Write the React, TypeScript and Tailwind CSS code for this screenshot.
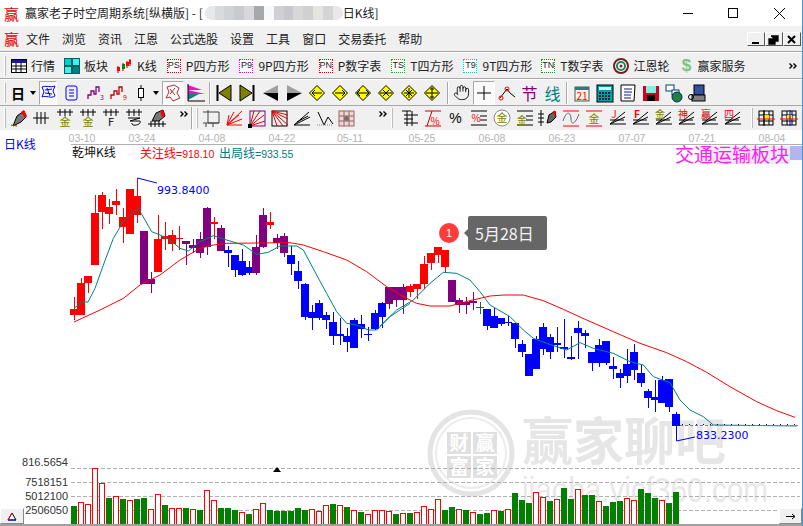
import React from "react";
import { Hand } from "lucide-react";

const F = { fontFamily: '"Noto Sans CJK SC", "Liberation Sans", sans-serif' };
const LS = { fontFamily: '"Liberation Sans", sans-serif' };
const DV = { fontFamily: '"DejaVu Sans", sans-serif' };
const R = "#ff0000", B = "#0000ff", P = "#800080", G = "#008000", T = "#008080";
type C = [number, number, number, number, string];
// wick top, wick bottom, body top, body bottom, colour (3x crop coordinates)
const c1: C[] = [
  [397,465,432,450,R],[340,450,354,450,R],[333,384,333,354,R],[90,300,144,300,R],[81,192,90,141,R],[102,177,126,147,R],[72,150,108,120,R],[130,234,156,186,R],[72,207,72,207,R],[39,174,93,150,R],
  [198,357,198,357,P],[320,384,342,357,P],[150,321,222,321,R],[171,255,213,222,R],[195,258,210,237,R],[183,255,219,222,R],[228,300,228,237,P],[222,264,240,249,P],[200,279,222,264,P],[125,270,129,246,P],
  [156,222,171,177,R],[180,258,189,258,P],[243,306,255,264,B],[270,336,270,315,B],[252,333,288,330,B],[288,330,306,324,B],[210,330,246,324,P],[129,249,150,246,P],[141,192,171,180,R],[207,252,219,234,P],
  [204,276,213,264,P],[243,330,270,297,B],[288,372,318,348,B],[354,465,357,456,B],[420,495,441,459,B],[405,465,414,459,B],[441,492,450,465,B],[441,540,471,513,B],[459,540,507,513,B],[489,561,513,531,B],
  [459,549,465,549,B],[450,519,477,492,B],[486,528,507,510,B],[435,495,444,492,B],[410,490,414,456,B],
];
const c2: C[] = [
  [231,297,231,282,P],[231,291,231,270,P],[222,312,231,270,P],[222,261,228,246,R],[222,267,222,237,R],[138,237,162,222,R],[129,180,129,159,R],[111,159,111,135,R],[120,189,120,171,R],
  [210,276,210,276,P],[264,309,270,285,P],[261,312,276,285,P],[246,300,272,279,P],[276,312,291,294,"#306030"],[297,360,297,348,B],[294,354,318,354,B],[324,348,324,342,B],[318,348,336,339,B],[339,414,339,387,B],
  [390,441,402,426,B],[432,498,432,498,B],[378,477,387,477,B],[339,435,351,417,B],[372,447,381,426,B],[351,426,399,405,B],[327,444,411,417,B],[378,450,441,447,B],[333,447,354,369,B],[360,414,369,378,B],
  [426,483,426,459,B],[387,471,405,459,B],[393,465,393,459,B],[441,507,468,477,B],[477,534,489,504,B],[417,519,462,498,B],[402,510,426,480,B],[462,531,489,519,B],[537,594,543,564,B],[510,606,561,570,B],
  [498,579,510,579,B],[507,606,507,591,B],[606,693,612,648,B],
];
const candles = [
  ...c1.map((c, i) => ({ x: 74 + 7 * i, d: c, oy: 165 })),
  ...c2.map((c, i) => ({ x: 389 + 7 * i, d: c, oy: 210 })),
];
const v1 = [198,186,192,84,129,174,168,177,180,177,174,207,162,195,204,204,204,207,210,150,180,204,204,210,216,222,207,189,210,213,213,213,204,210,207,213,195,192,195,201,210,216,222,210,210,213,222];
const v1c = "grrrrgrgrggrrgrrgrgrrgggrgrrggggggrrrgrgrgrrrrg";
const v2 = [339,339,336,318,327,297,330,321,327,330,336,342,339,330,333,327,279,300,309,276,291,303,297,264,297,267,285,285,303,318,306,303,294,300,267,279,294,300,309,276];
const v2c = "rgrrrrggrgrggrgrgggrrgrggrggrgggrrgggrgg";
const pts = (a: number[][], ox: number, oy: number) => a.map(([x, y]) => `${ox + x / 3},${oy + y / 3}`).join(" ");
const redA = [[42,471],[120,435],[190,400],[240,360],[300,330],[360,285],[420,250],[460,240],[500,235],[690,233],[730,240],[790,260],[860,285],[920,320],[980,365],[1040,400]];
const redB = [[60,255],[110,280],[150,288],[210,288],[270,272],[330,258],[370,255],[430,255],[490,272],[550,298],[620,330],[700,365],[780,400],[860,428],[920,455],[980,487],[1050,530],[1130,575],[1190,602],[1245,622]];
const tealA = [[42,430],[66,411],[84,411],[105,370],[130,300],[160,220],[190,170],[210,150],[235,130],[255,165],[275,200],[300,210],[330,225],[360,250],[385,258],[420,230],[460,212],[500,225],[550,240],[590,268],[625,262],[660,243],[710,243],[730,255],[770,330],[800,385],[830,440],[860,475],[890,480],[925,495],[950,495],[990,455],[1050,415]];
const tealB = [[0,348],[50,300],[100,270],[150,220],[190,187],[230,190],[270,210],[300,245],[330,285],[390,320],[430,360],[460,385],[500,400],[560,420],[600,398],[640,415],[700,430],[750,455],[790,465],[820,500],[870,518],[900,570],[930,600],[970,620],[1000,645],[1250,648]];
const dates: [string, number][] = [["03-10",82],["03-24",142],["04-08",212],["04-22",282],["05-11",350],["05-25",422],["06-08",492],["06-23",562],["07-07",632],["07-21",702],["08-04",772]];

const S = ({ children, w = 22 }: { children: React.ReactNode; w?: number }) => (
  <svg width={w} height={22} viewBox={`0 0 ${w} 22`} fill="none" strokeWidth={1} className="shrink-0">{children}</svg>
);
const Tx = ({ x, y, s, c, t, b }: { x: number; y: number; s: number; c: string; t: string; b?: boolean }) => (
  <text x={x} y={y} fontSize={s} fill={c} textAnchor="middle" fontWeight={b ? 700 : 400} style={F}>{t}</text>
);
const Dia = ({ d }: { d: string }) => (
  <S><path d="M11 3.5 18.5 11 11 18.5 3.5 11Z" fill="#ffff00" stroke="#000" /><path d={d} stroke="#000" /></S>
);
const Fan = ({ t, c, b }: { t: string; c: string; b?: boolean }) => (
  <Btn w={23}><S><path d="M4 17H20M4 17 19 5M4 17 19 10M4 13H18" stroke="#000" /><Tx x={8} y={11} s={10} c={c} t={t} b={b} /></S></Btn>
);
const Hash = ({ t, c }: { t: string; c: string }) => (
  <S><path d="M3 5H19M6 2V9M11 2V9M16 2V9" stroke="#000" /><Tx x={11} y={19} s={11} c={c} t={t} /></S>
);
const Brush = () => (
  <S><path d="M5 19 9 9 16 4 18 10 13 15Z" fill="#777" stroke="#000" /><path d="M13 5 16 3 19 9 17 11Z" fill="#f00" /><path d="M3 18 9 19" stroke="#f00" /></S>
);

const Grip = ({ ml = 4 }: { ml?: number }) => <div className="mr-[1px] h-[20px] w-[2px] shrink-0 border-l border-white bg-[#bcbcbc]" style={{ marginLeft: ml }} />;
const Sep = () => <div className="mx-[2px] h-[22px] w-[2px] shrink-0 border-r border-white bg-[#a8a8a8]" />;
const Gap = ({ w }: { w: number }) => <div className="shrink-0" style={{ width: w }} />;
function Btn({ children, w = 23, on }: { children: React.ReactNode; w?: number; on?: boolean }) {
  return (
    <div className={`flex h-[24px] shrink-0 items-center justify-center ${on ? "border border-t-[#a8a8a8] border-l-[#a8a8a8] border-r-white border-b-white bg-[#fafafa]" : ""}`} style={{ width: w }}>{children}</div>
  );
}
const Caret = () => <div className="flex w-[7px] shrink-0 justify-center"><svg width="6" height="4"><path d="M0 0H6L3 4Z" fill="#000" /></svg></div>;
const More = () => <svg width="8" height="6"><path d="M0.5 0.5 3 3 0.5 5.5M4.5 0.5 7 3 4.5 5.5" stroke="#000" strokeWidth="1.4" fill="none" /></svg>;

const Box = ({ t, c }: { t: string; c: string }) => (
  <div className="flex h-[14px] w-[14px] shrink-0 items-center justify-center border border-dotted bg-white text-[9px] leading-none text-[#222]" style={{ borderColor: c, ...LS }}>{t}</div>
);
const Item = ({ icon, label, ml, gap = 5 }: { icon: React.ReactNode; label: string; ml: number; gap?: number }) => (
  <div className="flex shrink-0 items-center" style={{ marginLeft: ml, gap }}>
    {icon}<span className="text-[12px] leading-none text-[#222]">{label}</span>
  </div>
);
const Logo = () => <span className="text-[15px] leading-none text-[#e00000]" style={{ fontFamily: '"Noto Sans CJK SC", serif' }}>赢</span>;
const Tx2 = ({ t, c }: { t: string; c: string }) => <span className="text-[16px] leading-none" style={{ color: c }}>{t}</span>;

export default function App() {
  return (
    <div className="flex h-[526px] w-[803px] flex-col overflow-hidden border-r border-[#3f97d8] bg-white" style={F}>
      {/* title */}
      <div className="flex h-[26px] shrink-0 items-center bg-white pl-[4px] text-[12px] text-[#222]">
        <Logo />
        <span className="ml-[6px] whitespace-pre">赢家老子时空周期系统[纵横版] - [</span>
        <div className="ml-[2px] flex h-[14px] w-[138px] overflow-hidden rounded-[7px]">
          {["#e8e8e8","#d8dadc","#d0d2d6","#c8cacc","#d8d8dc","#a8a8a8","#f6f8fa","#d0d0d4","#c8c8cc","#d8d8d8","#d0d0d0","#e4e4e0","#d4d4d4","#e8e8e8"].map((c, i) => (
            <div key={i} className="flex-1" style={{ background: c }} />
          ))}
        </div>
        <span>日K线]</span>
        <div className="ml-auto flex items-center pr-[17px]">
          <div className="mr-[35px] h-px w-[10px] bg-black" />
          <div className="mr-[36px] h-[10px] w-[10px] border border-black" />
          <svg width="11" height="11"><path d="M0 0 11 11M11 0 0 11" stroke="#000" /></svg>
        </div>
      </div>
      {/* menu */}
      <div className="flex h-[25px] shrink-0 items-center bg-[#f0f0f0] pl-[4px] text-[12px] text-[#222]">
        <Logo />
        <div className="ml-[7px] flex gap-[12px]">
          {["文件","浏览","资讯","江恩","公式选股","设置","工具","窗口","交易委托","帮助"].map((m) => <span key={m}>{m}</span>)}
        </div>
        <div className="ml-auto flex pr-[1px]">
          {[<path key="a" d="M4 10H11" stroke="#000" strokeWidth="2" />, <path key="b" d="M5 3H12V8H9M3 6H9V11H3Z" stroke="#000" strokeWidth="1.3" />, <path key="c" d="M4 3 11 10M11 3 4 10" stroke="#000" strokeWidth="2" />].map((p, i) => (
            <div key={i} className="h-[14px] w-[18px] border border-t-white border-l-white border-r-[#555] border-b-[#555] bg-[#f0f0f0]">
              <svg width="16" height="12">{p}</svg>
            </div>
          ))}
        </div>
      </div>
      <div className="h-[2px] shrink-0 border-b border-white bg-[#a8a8a8]" />
      {/* toolbar 1 */}
      <div className="flex h-[25px] shrink-0 items-center bg-[#f0f0f0]">
        <Grip />
        <Item ml={4} gap={4} label="行情" icon={<svg width="16" height="14"><rect x=".5" y=".5" width="15" height="13" fill="#fff" stroke="#000" /><rect x="1" y="1" width="14" height="3" fill="#1a1a90" /><path d="M1 7H15M1 10H15M5 4V13M10 4V13" stroke="#000" /></svg>} />
        <Item ml={9} gap={4} label="板块" icon={<svg width="16" height="16"><rect width="16" height="16" fill="#006060" /><rect x="1" y="1" width="6" height="6" fill="#00d0d0" /><rect x="9" y="1" width="6" height="6" fill="#40f0f0" /><rect x="1" y="9" width="6" height="6" fill="#40f0f0" /><rect x="9" y="9" width="6" height="6" fill="#008080" /></svg>} />
        <Item ml={8} label="K线" icon={<svg width="16" height="16"><path d="M2 8V15M7 5V13M11 3V10M14 1V8" stroke="#b00" /><rect x="1" y="9" width="3" height="4" fill="#f00" /><rect x="6" y="6" width="3" height="5" fill="#080" /><rect x="10" y="4" width="3" height="4" fill="#f00" /><rect x="13" y="2" width="2" height="4" fill="#f00" /></svg>} />
        <Item ml={10} label="P四方形" icon={<Box t="PS" c="#e00000" />} />
        <Item ml={10} label="9P四方形" icon={<Box t="P9" c="#e000e0" />} />
        <Item ml={10} label="P数字表" icon={<Box t="PN" c="#e00000" />} />
        <Item ml={10} label="T四方形" icon={<Box t="TS" c="#00c000" />} />
        <Item ml={10} label="9T四方形" icon={<Box t="T9" c="#00d0d0" />} />
        <Item ml={9} label="T数字表" icon={<Box t="TN" c="#00a000" />} />
        <Item ml={9} label="江恩轮" icon={<svg width="16" height="16"><circle cx="8" cy="8" r="7" fill="#fff" stroke="#702020" strokeWidth="2" /><circle cx="8" cy="8" r="4" fill="#fff" stroke="#208060" strokeWidth="2" /><circle cx="8" cy="8" r="1.5" fill="#802020" /></svg>} />
        <Item ml={11} label="赢家服务" icon={<span className="w-[12px] text-center text-[17px] font-bold leading-none text-[#80c080]" style={LS}>$</span>} />
        <div className="ml-auto pr-[5px]"><More /></div>
      </div>
      <div className="h-[2px] shrink-0 border-b border-white bg-[#a8a8a8]" />
      {/* toolbar 2 */}
      <div className="flex h-[25px] shrink-0 items-center bg-[#f0f0f0]">
        <Grip />
        <Btn w={22}><span className="text-[14px] font-bold leading-none text-black">日</span></Btn>
        <Caret />
        <Gap w={3} />
        <Btn on w={18}><S w={16}><path d="M2 5C5 3 11 6 15 4L13 9 15 14C11 17 6 13 2 15L4 10ZM5 8 12 7M5 11 12 12M7 6 10 14" stroke={B} /></S></Btn>
        <Gap w={3} />
        <Btn w={24}><S><rect x="5" y="4" width="11" height="14" rx="2" stroke={B} /><path d="M8 8H13M8 11H13M8 14H13" stroke={B} /></S></Btn>
        <Btn w={24}><S><path d="M3 17V13H6V9H9V12H11V5H14V10" stroke={P} strokeWidth="1.3" /><Tx x={17} y={18} s={7} c={P} t="3" /></S></Btn>
        <Btn w={22}><S><path d="M3 17V13H6V9H9V12H11V5H14V10" stroke="#c00000" strokeWidth="1.3" /><Tx x={17} y={18} s={7} c="#c00000" t="9" /></S></Btn>
        <Btn w={22}><S><path d="M11 3V19" stroke="#000" /><rect x="8.5" y="6.5" width="5" height="9" fill="#fff" stroke="#000" /></S></Btn>
        <Caret />
        <Gap w={3} />
        <Btn on w={22}><S w={20}><path d="M4 5 11 3 16 6 14 11 17 16 10 19 7 15 3 16 6 10ZM7 7 12 13M12 6 7 12" stroke="#b03030" /></S></Btn>
        <Gap w={1} />
        <Btn w={22}><S w={20}><path d="M2 3 16 8 2 8ZM2 8 19 12 2 12Z" fill="#f010c0" /><path d="M2 12 13 12 2 18Z" fill="#108080" /><path d="M2 2V19H19" stroke="#000" /></S></Btn>
        <Sep />
        <Btn w={22}><S w={18}><path d="M2.5 3V19" stroke="#000" strokeWidth="2" /><path d="M16 3V19L4 11Z" fill="#808000" stroke="#000" /></S></Btn>
        <Btn w={24}><S w={18}><path d="M15.5 3V19" stroke="#000" strokeWidth="2" /><path d="M2 3V19L14 11Z" fill="#808000" stroke="#000" /></S></Btn>
        <Btn w={23}><S w={18}><path d="M1 11 16 3V11Z" fill="#a0a0a0" /><path d="M1 11 16 19V11Z" fill="#000" /></S></Btn>
        <Btn w={24}><S w={18}><path d="M17 11 2 3V11Z" fill="#a0a0a0" /><path d="M17 11 2 19V11Z" fill="#000" /></S></Btn>
        <Btn w={22}><Dia d="M6 11H16M9 8 6 11 9 14" /></Btn>
        <Btn w={23}><Dia d="M6 11H16M13 8 16 11 13 14" /></Btn>
        <Btn w={23}><Dia d="M5 11H17M8 8 5 11 8 14M14 8 17 11 14 14" /></Btn>
        <Btn w={23}><Dia d="M5 11H17M8 8 11 11 8 14M14 8 11 11 14 14" /></Btn>
        <Btn w={23}><Dia d="M11 6V16M6 11H16M8 8 14 14M14 8 8 14" /></Btn>
        <Btn w={23}><Dia d="M5 11H17M11 5V17M9 7H13M9 15H13" /></Btn>
        <Gap w={2} />
        <Sep />
        <Btn w={20}><Hand size={17} strokeWidth={1.2} color="#000" /></Btn>
        <Gap w={2} />
        <Btn on w={22}><S w={20}><path d="M10 4V18M3 11H17" stroke="#000" /></S></Btn>
        <Btn w={23}><S><path d="M4 16 11 7 14 11 19 15" stroke="#000" /><circle cx="5" cy="16" r="2" stroke="#f00" /><circle cx="11" cy="7" r="2" stroke="#f00" /></S></Btn>
        <Btn w={23}><Tx2 t="节" c={P} /></Btn>
        <Btn w={23}><Tx2 t="线" c={T} /></Btn>
        <Sep />
        <Btn w={23}><S><rect x="4" y="5" width="14" height="14" fill="#f8f4e0" stroke="#555" /><rect x="4" y="5" width="14" height="3" fill="#208080" /><Tx x={11} y={18} s={10} c="#f00" t="21" /></S></Btn>
        <Btn w={23}><S><rect x="3" y="3" width="16" height="17" fill="#00a0b0" stroke="#000" /><rect x="5" y="5" width="12" height="3" fill="#e0ffff" /><path d="M5 11H17M5 14H17M5 17H17" stroke="#000" strokeWidth="1.6" strokeDasharray="2 1" /></S></Btn>
        <Btn w={23}><S><path d="M4 3H18L17 19H4Z" fill="#fff" stroke="#000" /><path d="M7 7H15M7 10H15M7 13H14M7 16H14" stroke="#00208f" /></S></Btn>
        <Btn w={23}><S><rect x="3" y="4" width="16" height="15" fill="#d00020" /><rect x="6" y="4" width="10" height="7" fill="#80f0e0" /><rect x="7" y="13" width="8" height="6" fill="#000" /></S></Btn>
        <Btn w={23}><S><rect x="3" y="3" width="8" height="6" fill="#fff" stroke="#004080" /><rect x="9" y="8" width="7" height="5" fill="#fff" stroke="#004080" /><circle cx="14" cy="15" r="5" fill="#208040" stroke="#003060" /></S></Btn>
        <Btn w={23}><S><rect x="8" y="3" width="10" height="10" fill="#3050a0" stroke="#000" /><rect x="6" y="13" width="13" height="6" fill="#808080" stroke="#000" /><circle cx="5" cy="15" r="2.5" stroke="#000" /></S></Btn>
      </div>
      <div className="h-[1px] shrink-0 bg-[#a8a8a8]" />
      {/* toolbar 3 */}
      <div className="flex h-[24px] shrink-0 items-center bg-[#f0f0f0]">
        <Grip />
        <Btn w={23}><Brush /></Btn>
        <Btn w={23}><S><path d="M2 11H18M6 5V17M10 5V17M14 5V17" stroke="#000" /></S></Btn>
        <Btn w={23}><Hash t="金" c="#808000" /></Btn>
        <Btn w={23}><Hash t="金" c="#808000" /></Btn>
        <Btn w={23}><S><path d="M3 5H19M6 2V9M11 2V9M16 2V9" stroke="#000" /><Tx x={11} y={19} s={11} c="#000" t="F" /></S></Btn>
        <Btn w={23}><S><path d="M3 5H19M6 2V9M11 2V9M16 2V9M5 11H17L7 14H17C19 18 8 20 9 16" stroke="#000" /></S></Btn>
        <Btn w={23}><S><path d="M6 14 10 6 17 3 19 9 13 14Z" fill="#777" stroke="#000" /><path d="M14 4 17 3 19 9 16 10Z" fill="#f00" /><path d="M2 17H20M5 14V20M9 14V20M13 14V20M17 14V20" stroke="#000" /></S></Btn>
        <div className="mb-[8px] flex w-[21px] shrink-0 justify-end pr-[1px]"><More /></div>
        <Sep />
        <Grip ml={1} />
        <Btn w={23}><S><path d="M3 5H19V16H8V3M3 16H19M6 16V20M13 16V20" stroke="#444" /></S></Btn>
        <Btn w={23}><S><path d="M4 18 19 4M4 18 16 8M4 18 11 5M4 18 6 8M4 18 19 12M4 18H19" stroke="#f00" /></S></Btn>
        <Btn w={23}><S><rect x="4" y="4" width="15" height="15" stroke={P} /><path d="M4 19 18 8M4 19 14 4M4 19 8 4M4 19 19 14" stroke="#e00000" /><rect x="2" y="17" width="4" height="4" fill="#000" /></S></Btn>
        <Btn w={23}><S><rect x="3" y="4" width="15" height="15" stroke="#000" /><path d="M3 4 19 18M3 4 14 19M3 4 8 19M3 4 19 12M3 4 19 8" stroke="#e00000" /></S></Btn>
        <Btn w={22}><S><path d="M3 18 18 5M3 18 19 10M3 18H19M6 15 17 9" stroke="#000" /></S></Btn>
        <Btn w={23}><S><path d="M4 5 10 18 14 10 19 17" stroke="#000" /><path d="M3 18H19" stroke="#888" strokeDasharray="1 1" /></S></Btn>
        <Btn w={22}><S><rect x="3" y="4" width="15" height="15" fill="#e8d8d8" stroke="#a06060" /><path d="M8 4V19M13 4V19M3 9H18M3 14H18" stroke="#a06060" /><circle cx="10.5" cy="11.5" r="2.5" fill="#707070" /></S></Btn>
        <div className="mb-[8px] flex w-[30px] shrink-0 justify-end pr-[1px]"><More /></div>
        <Grip ml={3} />
        <Gap w={5} />
        <Btn w={22}><S><path d="M8 4V19M13 4V19M3 4H12M5 8H19M5 12H14M5 16H19" stroke="#000" /></S></Btn>
        <Btn w={23}><S><path d="M3 4H19M3 19H19M5 19 10 4" stroke="#c00" /><Tx x={13} y={18} s={10} c="#f00" t="%" /></S></Btn>
        <Btn w={23}><span className="text-[14px] leading-none text-black" style={LS}>%</span></Btn>
        <Btn w={23}><S><path d="M3 4H19M12 9H19M12 13H19M3 18H19" stroke="#000" /><Tx x={8} y={15} s={10} c="#f00" t="%" /></S></Btn>
        <Btn w={23}><S><circle cx="11" cy="11" r="8" fill="#fff" stroke="#888" /><Tx x={11} y={15} s={11} c="#808000" t="金" /></S></Btn>
        <Btn w={23}><S><path d="M3 4H19M12 9H19M12 13H19M3 18H19" stroke="#000" /><Tx x={8} y={17} s={10} c="#808000" t="金" /></S></Btn>
        <Btn w={23}><S><path d="M4 3V19M1 7H7M1 11H7M1 15H7" stroke="#000" /><path d="M10 16 12 8 18 4 19 10 14 15Z" fill="#666" stroke="#000" /><path d="M15 5 18 4 19 10Z" fill="#f00" /></S></Btn>
        <Btn w={23}><S><path d="M3 4H19M3 19H19" stroke="#f00" /><path d="M3 14C7 2 11 6 11 12S15 18 19 7" stroke="#666" /></S></Btn>
        <Btn w={23}><S><path d="M3 4H19M3 19H19" stroke="#f00" /><Tx x={11} y={16} s={11} c="#808000" t="金" /></S></Btn>
        <Fan t="J" c="#f00" />
        <Fan t="F" c="#f00" b />
        <Fan t="金" c="#808000" />
        <Fan t="神" c="#f00" />
        <Fan t="赢" c="#c00" />
        <Fan t="四" c="#f00" />
        <Gap w={4} />
        <Grip />
        {[1, 2].map((k) => (
          <Btn key={k} w={23}><S><rect x="4" y="4" width="14" height="14" stroke="#000" /><path d="M9 4V18M14 4V18M4 8H18M4 14H18" stroke="#000" /><rect x="9" y="8" width="5" height="4" fill="#ffe000" /><path d="M2 12H20" stroke="#f00" /><path d={k === 2 ? "M12 3V19" : "M9 3V19"} stroke={k === 2 ? B : "#000"} /></S></Btn>
        ))}
      </div>
      {/* chart */}
      <div className="relative min-h-0 flex-1">
        <svg width="802" height="396" viewBox="0 130 802 396" className="block" style={{ ...F }}>
          {/* watermark */}
          <g>
            <circle cx="471" cy="453" r="41" fill="none" stroke="#e4e4e4" strokeWidth="5" />
            <circle cx="471" cy="453" r="35" fill="none" stroke="#ececec" strokeWidth="2" />
            <g shapeRendering="crispEdges" fill="#e0e0e0">
              <rect x="447" y="432" width="24" height="22" />
              <rect x="473" y="432" width="24" height="22" />
              <rect x="447" y="456" width="24" height="22" />
              <rect x="473" y="456" width="24" height="22" />
            </g>
            <g fontSize="19" fill="#fff" textAnchor="middle" fontWeight="700">
              <text x="459" y="450">财</text><text x="485" y="450">赢</text>
              <text x="459" y="474">富</text><text x="485" y="474">家</text>
            </g>
            <text x="522" y="460" fontSize="51" fontWeight="700" fill="#e6e6e6">赢家聊吧</text>
            <text x="522" y="502" fontSize="35" fill="#e8e8e8" textLength="246" lengthAdjust="spacingAndGlyphs" style={LS}>jiaoba.yicf360.com</text>
          </g>
          {/* date axis */}
          <path d="M71 144.5H802" stroke="#b0b0b0" />
          {dates.map(([d, x]) => (
            <text key={d} x={x} y={142} fontSize="10.5" fill="#b4b4b4" textAnchor="middle" style={LS}>{d}</text>
          ))}
          <text x="4" y="149" fontSize="12" fill={B}>日K线</text>
          <text x="72" y="157" fontSize="12" fill="#111">乾坤K线</text>
          <text x="140" y="158" fontSize="12" fill={R}>关注线<tspan fontSize="10.5" style={LS}>=918.10</tspan></text>
          <text x="219" y="158" fontSize="12" fill={T}>出局线<tspan fontSize="10.5" style={LS}>=933.55</tspan></text>
          <rect x="700" y="146" width="90" height="18" fill="#ecebfb" />
          <rect x="790" y="146" width="12" height="14" fill="#b4b4f0" />
          <text x="675" y="162" fontSize="19" fill="#ff20f0">交通运输板块</text>
          {/* candles */}
          <g shapeRendering="crispEdges">
            {candles.map(({ x, d: [wt, wb, bt, bb, col], oy }, i) => (
              <g key={i} fill={col}>
                <rect x={x} y={oy + wt / 3} width={1} height={Math.max(1, (wb - wt) / 3)} />
                <rect x={x - 4} y={oy + bt / 3} width={8} height={Math.max(1, (bb - bt) / 3)} />
              </g>
            ))}
          </g>
          {/* moving averages */}
          <polyline fill="none" stroke={R} points={pts(redA, 60, 165)} />
          <polyline fill="none" stroke={R} points={pts(redB, 380, 210)} />
          <polyline fill="none" stroke={T} points={pts(tealA, 60, 165)} />
          <polyline fill="none" stroke={T} points={pts(tealB, 380, 210)} />
          <path d="M680 425.5H798" stroke="#808080" strokeDasharray="3 2" />
          <path d="M682 424.5H798" stroke="#000080" strokeDasharray="1 6" />
          {/* high / low */}
          <path d="M137.5 178 157 183" stroke={B} fill="none" />
          <text x="157" y="194" fontSize="11" fill={B} style={DV}>993.8400</text>
          <path d="M676.5 426V441L695 437" stroke={B} fill="none" />
          <text x="696" y="439" fontSize="11" fill={B} style={DV}>833.2300</text>
          {/* volume */}
          {[468, 482, 496, 510].map((y) => (
            <path key={y} d={`M71 ${y + 0.5}H800`} stroke="#b0b0b0" strokeDasharray="4 2" />
          ))}
          {v1.map((z, i) => {
            const x = 71 + 7 * i, y = Math.round(440 + z / 3);
            return v1c[i] === "r"
              ? <rect key={i} x={x + 0.5} y={y + 0.5} width={5} height={524 - y - 0.5} fill="#fff" stroke={R} shapeRendering="crispEdges" />
              : <rect key={i} x={x} y={y} width={6} height={524 - y} fill={G} shapeRendering="crispEdges" />;
          })}
          {v2.map((z, i) => {
            const x = 400 + 7 * i, y = Math.round(400 + z / 3);
            return v2c[i] === "r"
              ? <rect key={i} x={x + 0.5} y={y + 0.5} width={5} height={524 - y - 0.5} fill="#fff" stroke={R} shapeRendering="crispEdges" />
              : <rect key={i} x={x} y={y} width={6} height={524 - y} fill={G} shapeRendering="crispEdges" />;
          })}
          <path d="M273 472 277 467 281 472Z" fill="#000" />
          {[["816.5654", 466], ["7518151", 486], ["5012100", 500], ["2506050", 514]].map(([t, y]) => (
            <text key={t} x="68" y={y} fontSize="11" fill="#333" textAnchor="end" style={LS}>{t}</text>
          ))}
          <rect x="0" y="524" width="802" height="2" fill="#a0a0a0" />
        </svg>
        {/* tooltip */}
        <div className="absolute left-[439px] top-[86px] flex items-center">
          <div className="flex h-[20px] w-[20px] items-center justify-center rounded-full bg-[#ff3b3b] text-[11px] text-white" style={LS}>1</div>
          <div className="ml-[5px] h-0 w-0 border-y-[4px] border-r-[4px] border-y-transparent border-r-[#666]" />
          <div className="flex h-[34px] w-[79px] items-center justify-start rounded-[2px] bg-[#666] pl-[7px] text-[16px] text-[#f4f4f4]">5月28日</div>
        </div>
        {/* corner buttons */}
        <div className="absolute bottom-[2px] left-0 flex h-[16px] w-[24px] items-center justify-center border border-t-white border-l-white border-r-[#888] border-b-[#888] bg-[#f0f0f0]">
          <svg width="10" height="9"><path d="M5 1 9 8H1Z" fill="#fff" stroke="#000" /><path d="M1 8H9" stroke="#00f" /><path d="M5 1 1 8" stroke="#f00" /></svg>
        </div>
        <div className="absolute bottom-[2px] right-0 flex h-[16px] w-[23px] items-center justify-center border border-t-white border-l-white border-r-[#888] border-b-[#888] bg-[#f0f0f0]">
          <svg width="10" height="7"><path d="M0 3.5H9M6 1 9 3.5 6 6" stroke="#000" fill="none" /></svg>
        </div>
      </div>
    </div>
  );
}
